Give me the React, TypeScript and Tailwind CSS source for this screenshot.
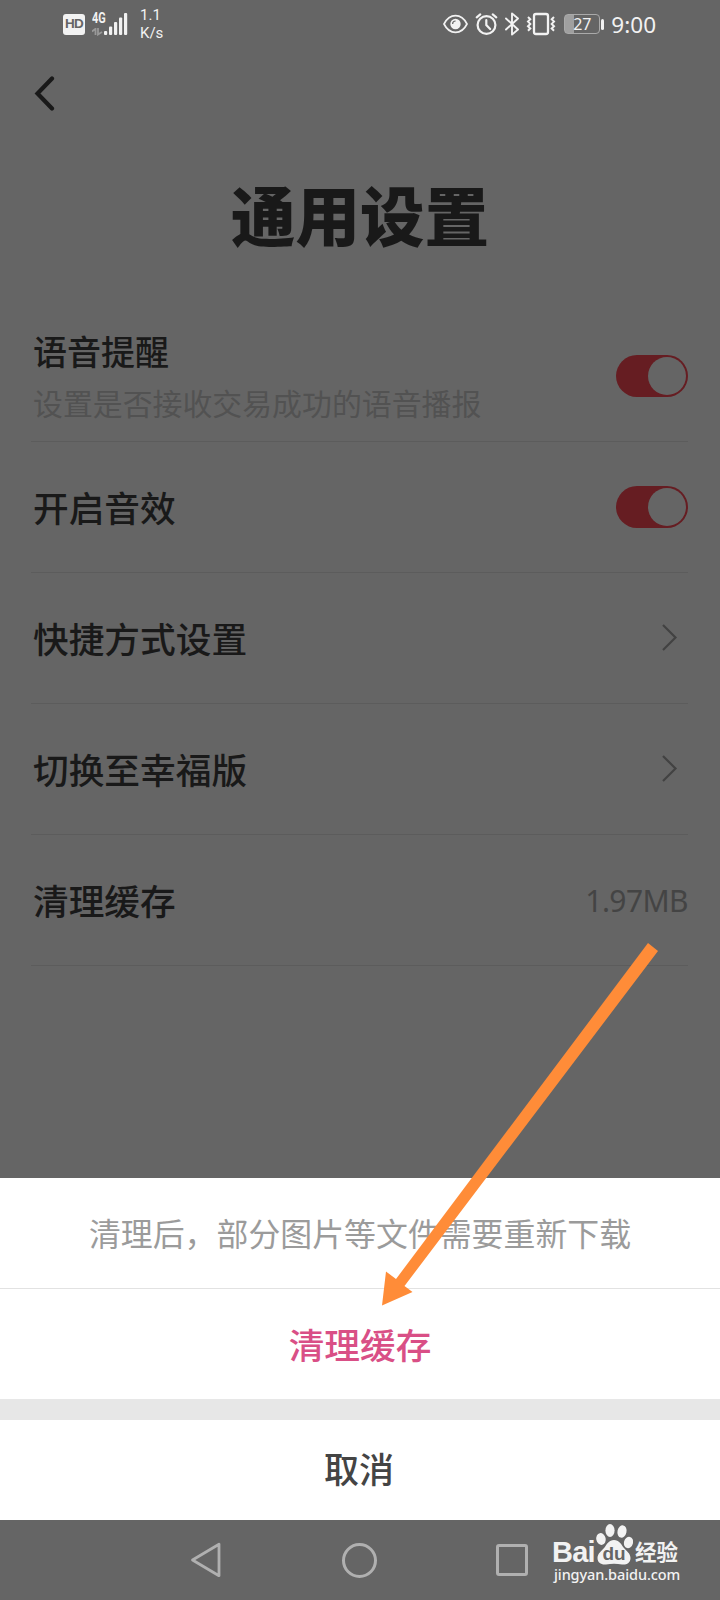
import React, { useState } from 'react';

const CJK = "font-['Noto_Sans_CJK_SC',sans-serif]";

function StatusBar() {
    return (
        <header className="flex h-12 items-start text-[#f2f2f2]">
            <div className="ml-[63px] mt-3.5 flex h-[21px] w-[22px] items-center justify-center rounded-[3px] bg-[#f2f2f2] font-['Liberation_Sans',sans-serif] text-[13.5px] font-bold tracking-[-0.8px] text-[#656565]">
                HD
            </div>
            <div className="ml-[7px] mt-3 w-3">
                <div className="h-3 origin-left scale-x-[0.78] font-['Roboto',sans-serif] text-[14px] leading-3 font-bold">4G</div>
                <svg className="mt-1 h-2 w-3" viewBox="0 0 12 8" fill="none" stroke="#999" strokeWidth="1.8">
                    <path d="M0 3.5 3.5 0.8V7M6 0v6.5L10 4" />
                </svg>
            </div>
            <svg className="mt-[13px] h-[22px] w-6" viewBox="0 0 24 22" fill="currentColor">
                <rect x="0" y="18" width="3.2" height="4" rx="1" />
                <rect x="5" y="13.5" width="3.2" height="8.5" rx="1" />
                <rect x="10" y="9" width="3.2" height="13" rx="1" />
                <rect x="15" y="4.5" width="3.2" height="17.5" rx="1" />
                <rect x="20" y="0" width="3.2" height="22" rx="1" />
            </svg>
            <div className="ml-3 mt-1.5 font-['Roboto',sans-serif] text-[15px] leading-[18px]">
                <div>1.1</div>
                <div>K/s</div>
            </div>
            <div className="ml-auto mr-[64px] mt-3 flex h-6 items-center">
                <svg className="h-5 w-[25px]" viewBox="0 0 25 20" fill="none" stroke="currentColor" strokeWidth="1.7">
                    <path d="M1 10C4 4 8 1.6 12.5 1.6S21 4 24 10c-3 6-7 8.4-11.5 8.4S4 16 1 10Z" />
                    <circle cx="12.5" cy="10" r="5.2" fill="currentColor" stroke="none" />
                    <path d="M9.6 10a3 3 0 0 1 3-3" stroke="#656565" strokeWidth="1.2" />
                </svg>
                <svg className="ml-[7px] h-6 w-[23px]" viewBox="0 0 24 24" fill="none" stroke="currentColor" strokeWidth="2.3" strokeLinecap="round">
                    <circle cx="12" cy="13" r="9.3" />
                    <path d="M11.8 8v5.2l4 4M1.8 5 5.5 2M22.2 5l-3.7-3" />
                </svg>
                <svg className="ml-1.5 h-6 w-4" viewBox="0 0 16 24" fill="none" stroke="currentColor" strokeWidth="1.9" strokeLinejoin="round" strokeLinecap="round">
                    <path d="M2 6.5 14 17.5 8 22.6V1.4L14 6.5 2 17.5" />
                </svg>
                <svg className="ml-1.5 h-6 w-[30px]" viewBox="0 0 30 24" fill="none" stroke="currentColor" strokeWidth="2">
                    <rect x="8" y="2" width="14" height="20" rx="2" strokeWidth="2.3" />
                    <path d="M2 5l2.3 2.3L2 9.6l2.3 2.3L2 14.2l2.3 2.3L2 18.8M28 5l-2.3 2.3L28 9.6l-2.3 2.3 2.3 2.3-2.3 2.3 2.3 2.3" />
                </svg>
                <div className="ml-2 flex h-5 w-9 items-center rounded-[4px] border-[1.5px] border-[#aaa] bg-linear-to-r from-[#a0a0a0] from-27% to-transparent to-27%">
                    <span className="w-full text-center font-['Noto_Sans',sans-serif] text-[16px] leading-none">27</span>
                </div>
                <div className="ml-px h-[11px] w-[3px] rounded-sm bg-current" />
                <span className="ml-[7px] pt-0.5 font-['Noto_Sans',sans-serif] text-[22.5px] leading-none">9:00</span>
            </div>
        </header>
    );
}

function Toggle() {
    const [on, setOn] = useState(true);

    return (
        <button
            role="switch"
            aria-checked={on}
            onClick={() => setOn(!on)}
            className={`flex h-[42px] w-[72px] items-center rounded-full px-0.5 ${on ? 'justify-end bg-[#661d22]' : 'justify-start bg-[#555]'}`}
        >
            <span className="h-[38px] w-[38px] rounded-full bg-[#656565]" />
        </button>
    );
}

function Chevron() {
    return (
        <svg className="mr-2.5 h-7 w-[17px]" viewBox="0 0 17 28" fill="none" stroke="#424242" strokeWidth="2.2">
            <path d="M2 1 14.5 13.5 2 26" />
        </svg>
    );
}

function Row({ label, children }: { label: string; children: React.ReactNode }) {
    return (
        <div className="flex h-[131px] items-center justify-between border-b border-[#5c5c5c] pl-0.5">
            <span className="text-[35.7px] leading-none font-medium">{label}</span>
            {children}
        </div>
    );
}

function ActionSheet() {
    return (
        <section className="shrink-0 bg-white text-center">
            <p className="h-[111px] border-b border-[#e2e2e2] text-[31.9px] leading-[109px] text-[#9b9b9b]">
                清理后，部分图片等文件需要重新下载
            </p>
            <button className="block h-[110px] w-full text-[35.7px] leading-[110px] font-medium text-[#d94f86]">清理缓存</button>
            <div className="h-[21px] bg-[#e7e7e7]" />
            <button className="block h-[100px] w-full pr-0.5 pb-1 text-[35px] leading-[96px] font-medium text-[#444]">取消</button>
        </section>
    );
}

function Watermark() {
    return (
        <div className="absolute top-0 left-[552px] w-[130px] text-[#f2f2f2]">
            <div className="flex h-[45px] items-end">
                <span className="w-[43px] font-['Liberation_Sans',sans-serif] text-[29px] leading-[26px] font-bold tracking-[-0.8px]">Bai</span>
                <div className="relative h-[42px] w-[38px]">
                    <svg className="h-[42px] w-[38px]" viewBox="0 0 38 42" fill="currentColor">
                        <ellipse cx="6" cy="16" rx="4.7" ry="6" transform="rotate(-12 6 16)" />
                        <ellipse cx="15" cy="7.5" rx="4.6" ry="6.4" />
                        <ellipse cx="27" cy="8.5" rx="4.5" ry="6.2" transform="rotate(12 27 8.5)" />
                        <ellipse cx="33.5" cy="19.5" rx="4.5" ry="5.8" transform="rotate(15 33.5 19.5)" />
                        <path d="M19 17c5 0 7 4 9.500 7.500 3 3.500 7 6 7 10.500 0 5-4 7-8.500 6.500-5-1-11-1-16 0-5 .5-8.500-2-8.500-6.500 0-4.500 4-7 7-10.500C12 21 14 17 19 17Z" />
                    </svg>
                    <span className="absolute top-[22px] left-0 w-[38px] text-center font-['Liberation_Sans',sans-serif] text-[19px] leading-[18px] font-bold text-[#656565]">du</span>
                </div>
                <span className="ml-0.5 text-[21.5px] leading-[28px] font-bold">经验</span>
            </div>
            <div className="ml-0.5 font-['Noto_Sans',sans-serif] text-[14.5px] leading-[18px] font-medium tracking-[-0.1px]">jingyan.baidu.com</div>
        </div>
    );
}

function NavBar() {
    return (
        <nav className="relative h-20 shrink-0">
            <div className="ml-[190px] flex h-20 w-[340px] items-center justify-between">
                <svg className="h-9 w-8" viewBox="0 0 32 36" fill="none" stroke="#b0b0b0" strokeWidth="2.8" strokeLinejoin="round">
                    <path d="M29 2.300V33.700L2.500 18Z" />
                </svg>
                <div className="h-[35px] w-[35px] rounded-full border-3 border-[#b0b0b0]" />
                <div className="mr-0.5 h-8 w-8 rounded-[3px] border-3 border-[#b0b0b0]" />
            </div>
            <Watermark />
        </nav>
    );
}

function App() {
    return (
        <div className={`relative flex h-[1600px] w-[720px] flex-col overflow-hidden bg-[#656565] text-[#191919] ${CJK}`}>
            <StatusBar />
            <svg className="mt-7 ml-[34px] h-9 w-6" viewBox="0 0 24 36" fill="none" stroke="#191919" strokeWidth="4.2" strokeLinecap="round">
                <path d="M18 2.500 3.500 17.500 18 32.500" />
            </svg>
            <h1 className="mt-[69px] text-center text-[64.5px] leading-[64px] font-black">通用设置</h1>
            <main className="mt-[66px] mr-8 ml-[31px] flex-1">
                <div className="flex h-[131px] items-center justify-between border-b border-[#5c5c5c] pl-0.5">
                    <div>
                        <div className="text-[34px] leading-[52px] font-medium">语音提醒</div>
                        <div className="text-[29.9px] leading-[51px] text-[#525252]">设置是否接收交易成功的语音播报</div>
                    </div>
                    <Toggle />
                </div>
                <Row label="开启音效">
                    <Toggle />
                </Row>
                <Row label="快捷方式设置">
                    <Chevron />
                </Row>
                <Row label="切换至幸福版">
                    <Chevron />
                </Row>
                <Row label="清理缓存">
                    <span className="pt-0.5 font-['Noto_Sans',sans-serif] text-[30px] leading-none tracking-[-0.6px] text-[#444]">1.97MB</span>
                </Row>
            </main>
            <ActionSheet />
            <NavBar />
            <svg className="pointer-events-none absolute top-[940px] left-[380px] h-[370px] w-[280px]" viewBox="380 940 280 370" fill="#ff8c38">
                <path d="M648 943 658 951 404.500 1286 412.500 1292 382 1305.500 386 1271.500 396 1279Z" />
            </svg>
        </div>
    );
}

export default App;
